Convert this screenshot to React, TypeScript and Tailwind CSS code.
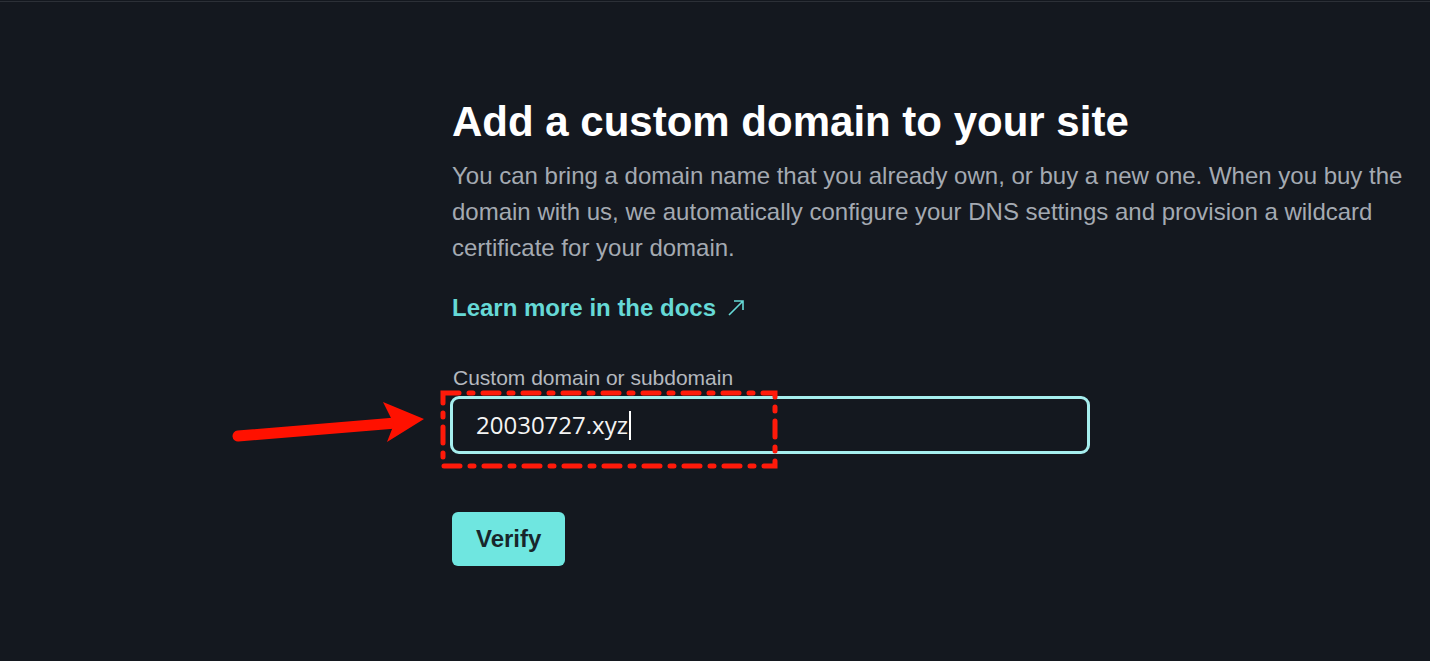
import * as React from "react";

const FONT = { fontFamily: '"Liberation Sans", Arial, sans-serif' };

function Annotations() {
  return (
    <svg
      className="pointer-events-none absolute left-0 top-0"
      width={1430}
      height={661}
      viewBox="0 0 1430 661"
    >
      <rect
        x={443}
        y={393}
        width={332}
        height={73}
        fill="none"
        stroke="#ff1a0a"
        strokeWidth={5}
        strokeLinecap="round"
        strokeDasharray="16 10 4 10"
      />
      <line
        x1={238}
        y1={436}
        x2={396}
        y2={423}
        stroke="#ff1100"
        strokeWidth={11}
        strokeLinecap="round"
      />
      <polygon points="383,402 424,419 387,442 394,424" fill="#ff1100" />
    </svg>
  );
}

export default function App() {
  return (
    <div className="relative min-h-[661px] w-full overflow-hidden bg-[#14181f]" style={FONT}>
      <div className="h-px bg-[#14181f]" />
      <div className="h-px bg-[#2c3037]" />

      <div className="ml-[452px] w-[960px] pt-[95px]">
        <h1 className="text-[42px] font-bold leading-[50px] text-white">
          Add a custom domain to your site
        </h1>
        <p className="mt-[11px] text-[24px] leading-[36px] text-[#a4aab2]">
          You can bring a domain name that you already own, or buy a new one. When you buy the
          domain with us, we automatically configure your DNS settings and provision a wildcard
          certificate for your domain.
        </p>

        <a
          href="#"
          className="mt-[24px] inline-flex items-center gap-[10px] text-[24px] font-bold leading-[36px] text-[#66d9d6]"
        >
          Learn more in the docs
          <svg width={20} height={20} viewBox="0 0 20 20" fill="none" stroke="#66d9d6" strokeWidth={1.6}>
            <path d="M3 17 L17 3 M8 3 H17 V12" />
          </svg>
        </a>

        <div className="mt-[36px]">
          <label className="block pl-px text-[21px] leading-[31px] text-[#b4b9bf]">
            Custom domain or subdomain
          </label>
          <div className="mt-[3px] ml-[-2px] flex h-[58px] w-[640px] items-center rounded-[9px] border-[3px] border-[#a6eeee] bg-[#14181f] pl-[23px]">
            <span
              className="text-[24px] leading-none text-[#f4f4f4]"
              style={{ fontFamily: '"Open Sans", "Noto Sans", sans-serif' }}
            >
              20030727.xyz
            </span>
            <span className="ml-px h-[29px] w-[2px] bg-white" />
          </div>
        </div>

        <button className="mt-[58px] h-[54px] rounded-[6px] bg-[#6fe6e0] px-[24px] text-[24px] font-bold text-[#18262b]">
          Verify
        </button>
      </div>

      <Annotations />
    </div>
  );
}
